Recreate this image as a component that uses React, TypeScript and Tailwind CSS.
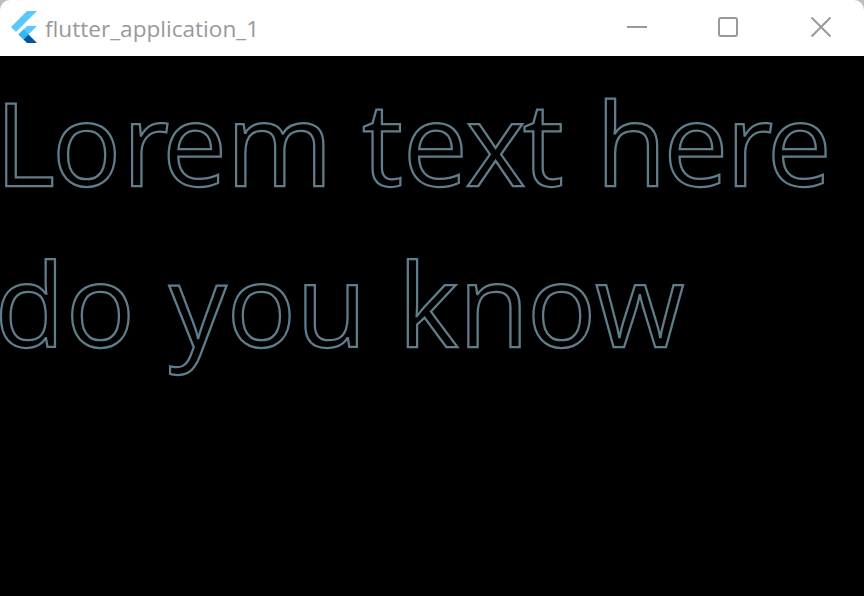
type Glyph = [text: string, spacing: string];

const lines: { place: string; glyphs: Glyph[] }[][] = [
  [
    {
      place: "ml-[-5px] w-[367px]",
      glyphs: [
        ["L", "tracking-[-3px]"],
        ["o", "tracking-[1px]"],
        ["r", "tracking-[-7px]"],
        ["e", "tracking-[-0.5px]"],
        ["m", "tracking-normal"],
      ],
    },
    {
      place: "w-[234px]",
      glyphs: [
        ["t", "tracking-normal"],
        ["e", "tracking-[-2px]"],
        ["x", "tracking-[-3px]"],
        ["t", "tracking-normal"],
      ],
    },
    {
      place: "",
      glyphs: [
        ["h", "tracking-[-3px]"],
        ["e", "tracking-[-2px]"],
        ["r", "tracking-[-6px]"],
        ["e", "tracking-normal"],
      ],
    },
  ],
  [
    { place: "ml-[-5.5px] w-[174.5px]", glyphs: [["do", "tracking-[1px]"]] },
    { place: "w-[229px]", glyphs: [["y", "tracking-normal"], ["ou", "tracking-[0.5px]"]] },
    {
      place: "",
      glyphs: [
        ["k", "tracking-normal"],
        ["n", "tracking-[-2px]"],
        ["ow", "tracking-[-1px]"],
      ],
    },
  ],
];

function FlutterLogo() {
  return (
    <svg width="27" height="33" viewBox="0 0 27 33" className="ml-[11px] shrink-0">
      <path d="M16 0H26L5 21L0 16Z" fill="#5ac8fa" />
      <path d="M16 15H26L12.5 28.5L7.5 23.5Z" fill="#5ac8fa" />
      <path d="M12.5 18.5L17.5 23.5L12.5 28.5L7.5 23.5Z" fill="#35b6f2" />
      <path d="M12.5 28.5L17.5 23.5L26 32H16Z" fill="#01579b" />
    </svg>
  );
}

export default function App() {
  return (
    <div className="flex h-[596px] w-[864px] flex-col overflow-hidden bg-[#bdbdbd] font-['Open_Sans',sans-serif]">
      <header className="flex h-14 shrink-0 items-start rounded-t-[10px] bg-white pt-[11px] text-[#999999]">
        <FlutterLogo />
        <span className="ml-[7px] w-[575px] whitespace-nowrap text-[22.6px] leading-[36px]">flutter_application_1</span>
        <svg width="220" height="32" viewBox="0 0 220 32" className="shrink-0" fill="none" stroke="currentColor" strokeWidth="2">
          <path d="M7 16H27" />
          <rect x="99" y="7" width="18" height="18" rx="2" />
          <path d="M191.500 6.500L210.500 25.500M210.500 6.500L191.500 25.500" />
        </svg>
      </header>
      <main className="grow overflow-hidden bg-black pt-[5px] text-[115px] leading-[161px] text-transparent [-webkit-text-stroke:2.25px_#607d8b]">
        {lines.map((line, i) => (
          <div key={i} className="flex whitespace-nowrap">
            {line.map((word, j) => (
              <span key={j} className={"shrink-0 " + word.place}>
                {word.glyphs.map(([text, spacing], k) => (
                  <span key={k} className={spacing}>
                    {text}
                  </span>
                ))}
              </span>
            ))}
          </div>
        ))}
      </main>
    </div>
  );
}
